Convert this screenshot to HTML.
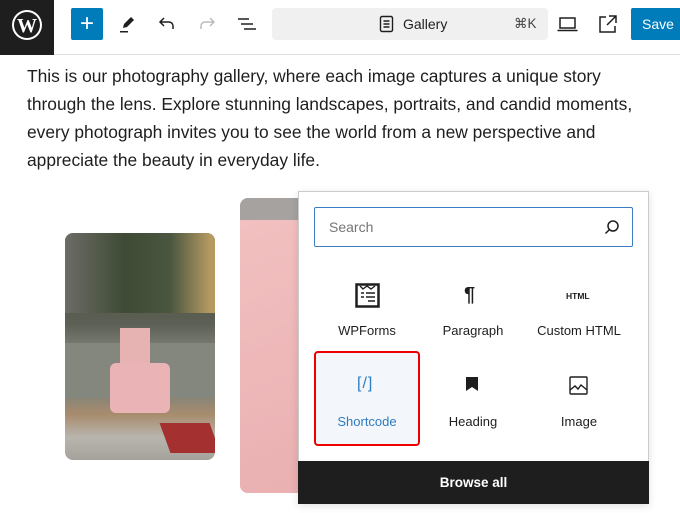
<!DOCTYPE html>
<html><head><meta charset="utf-8"><style>
*{box-sizing:border-box;margin:0;padding:0}
body{width:680px;height:513px;overflow:hidden;background:#fff;font-family:"Liberation Sans",sans-serif;color:#1e1e1e;position:relative}
.abs{position:absolute}
.top{left:0;top:0;width:680px;height:55px;border-bottom:1px solid #e0e0e0;background:#fff}
.logo{left:0;top:0;width:54px;height:55px;background:#1e1e1e}
.plus{left:71px;top:8px;width:32px;height:32px;background:#007cba;border-radius:2px;color:#fff;font-size:24px;line-height:31px;text-align:center}
.bar{left:272px;top:8px;width:276px;height:32px;background:#f0f0f0;border-radius:4px}
.save{left:631px;top:8px;width:52px;height:32px;background:#007cba;border-radius:2px;color:#fff;font-size:14px;line-height:32px;padding-left:11px}
.para{left:27px;top:62px;white-space:nowrap;font-size:17.4px;line-height:28px;color:#1e1e1e}
.ph1{left:65px;top:233px;width:150px;height:227px;border-radius:8px;overflow:hidden;background:linear-gradient(180deg,#6b6a60 0%,#4e5a42 20%,#5c5f55 40%,#8a8c84 55%,#7f837a 70%,#a88c6e 80%,#b8b5ae 90%,#a5a29c 100%)}
.ph2{left:240px;top:198px;width:70px;height:295px;border-radius:8px;overflow:hidden;background:#a6a29f}
.pop{left:298px;top:191px;width:351px;height:313px;background:#fff;border:1px solid #ccc;box-shadow:0 2px 8px rgba(0,0,0,.12)}
.inp{left:314px;top:207px;width:319px;height:40px;border:1.5px solid #3b7cc4;border-radius:2px;font-size:14px;color:#757575;padding:11px 0 0 14px}
.it{width:106px;text-align:center;font-size:13px;color:#1e1e1e}
.browse{left:298px;top:461px;width:351px;height:43px;background:#1e1e1e;color:#fff;font-size:13.5px;font-weight:bold;text-align:center;line-height:43px}
</style></head><body>
<div class="abs top"></div>
<div class="abs logo"><svg width="54" height="55" viewBox="0 0 54 55"><circle cx="27" cy="25" r="15" fill="#fff"/><circle cx="27" cy="25" r="13" fill="#1e1e1e"/><text x="27" y="32" font-family="Liberation Serif" font-weight="bold" font-size="20" fill="#fff" text-anchor="middle">W</text></svg></div>
<div class="abs plus">+</div>
<svg class="abs" style="left:115px;top:12px" width="24" height="24" viewBox="0 0 24 24"><path d="M8 16l1-4 7-7 3 3-7 7z" fill="#1e1e1e"/><rect x="5" y="19" width="8" height="1.5" fill="#1e1e1e"/></svg>
<svg class="abs" style="left:155px;top:12px" width="24" height="24" viewBox="0 0 24 24" fill="none" stroke="#1e1e1e" stroke-width="1.5"><path d="M18 17v-3a4 4 0 0 0-4-4H6M9 6l-4 4 4 4"/></svg>
<svg class="abs" style="left:195px;top:12px" width="24" height="24" viewBox="0 0 24 24" fill="none" stroke="#bbb" stroke-width="1.5"><path d="M6 17v-3a4 4 0 0 1 4-4h8M15 6l4 4-4 4"/></svg>
<svg class="abs" style="left:235px;top:12px" width="24" height="24" viewBox="0 0 24 24" stroke="#1e1e1e" stroke-width="1.5"><path d="M3 7h11M6 12h12M9 17h12"/></svg>
<div class="abs bar"></div>
<svg class="abs" style="left:379px;top:15px" width="16" height="18" viewBox="0 0 16 18" fill="none" stroke="#1e1e1e" stroke-width="1.4"><rect x="1.5" y="1.5" width="12" height="15" rx="1.5"/><path d="M4.5 6h6M4.5 9h6M4.5 12h6"/></svg>
<div class="abs" style="left:403px;top:16px;font-size:14px">Gallery</div>
<div class="abs" style="left:514px;top:16px;font-size:13.5px;color:#444">⌘K</div>
<svg class="abs" style="left:556px;top:14px" width="24" height="20" viewBox="0 0 24 20" fill="none" stroke="#1e1e1e" stroke-width="1.5"><rect x="4" y="4" width="15" height="10"/><path d="M1.5 16.5h20"/></svg>
<svg class="abs" style="left:597px;top:13px" width="22" height="22" viewBox="0 0 22 22" fill="none" stroke="#1e1e1e" stroke-width="1.5"><path d="M9 4H3v15h15v-6M12 3h7v7M19 3l-9 9"/></svg>
<div class="abs save">Save</div>
<div class="abs para">This is our photography gallery, where each image captures a unique story<br>through the lens. Explore stunning landscapes, portraits, and candid moments,<br>every photograph invites you to see the world from a new perspective and<br>appreciate the beauty in everyday life.</div>
<div class="abs ph1"><div class="abs" style="left:0;top:0;width:150px;height:80px;background:linear-gradient(90deg,#6c6c66,#3e4a34 40%,#4a5640 70%,#b59a62 97%)"></div><div class="abs" style="left:0;top:110px;width:150px;height:55px;background:#83877d"></div><div class="abs" style="left:55px;top:95px;width:30px;height:45px;background:#e7b2b2"></div><div class="abs" style="left:45px;top:130px;width:60px;height:50px;background:#eab3b5;border-radius:6px"></div><div class="abs" style="left:100px;top:190px;width:50px;height:30px;background:#a53030;transform:skew(20deg)"></div></div>
<div class="abs ph2"><div class="abs" style="left:0;top:20px;width:60px;height:275px;background:linear-gradient(160deg,#f2c0c0,#eab0b2)"></div><div class="abs" style="left:0;top:0;width:70px;height:22px;background:#a6a29f"></div></div>
<div class="abs pop"></div>
<div class="abs inp">Search</div>
<svg class="abs" style="left:604px;top:219px" width="16" height="16" viewBox="0 0 16 16" fill="none" stroke="#1e1e1e" stroke-width="1.5"><circle cx="9" cy="7" r="5"/><path d="M5.5 10.5L1.5 14.5"/></svg>
<div class="abs" style="left:314px;top:351px;width:106px;height:95px;border:2px solid #e00;border-radius:4px;background:#f3f7fb"></div>
<svg class="abs" style="left:355px;top:283px" width="25" height="25" viewBox="0 0 25 25"><rect x="1.5" y="1.5" width="22" height="22" fill="none" stroke="#1e1e1e" stroke-width="2.5"/><path d="M5 3l3 3 4-3 4 3 4-3" stroke="#1e1e1e" fill="none" stroke-width="1.4"/><path d="M6 10h3M11 10h9M6 14h3M11 14h9M13 18h7" stroke="#1e1e1e" stroke-width="1.6"/></svg>
<div class="abs" style="left:464px;top:284px;font-size:20px;font-weight:bold">¶</div>
<div class="abs" style="left:566px;top:291px;font-size:8.5px;font-weight:bold">HTML</div>
<div class="abs it" style="left:314px;top:323px">WPForms</div>
<div class="abs it" style="left:420px;top:323px">Paragraph</div>
<div class="abs it" style="left:526px;top:323px">Custom HTML</div>
<div class="abs" style="left:357px;top:375px;font-size:16px;color:#2e7bbf;letter-spacing:1px">[/]</div>
<svg class="abs" style="left:465px;top:376px" width="14" height="16" viewBox="0 0 14 16"><path d="M1 1h12v14l-6-4-6 4z" fill="#1e1e1e"/></svg>
<svg class="abs" style="left:569px;top:376px" width="19" height="19" viewBox="0 0 19 19" fill="none" stroke="#1e1e1e" stroke-width="1.4"><rect x="1" y="1" width="17" height="17" rx="1"/><path d="M1 14l5-4 3 3 3-4 6 5"/></svg>
<div class="abs it" style="left:314px;top:414px;color:#2e7bbf">Shortcode</div>
<div class="abs it" style="left:420px;top:414px">Heading</div>
<div class="abs it" style="left:526px;top:414px">Image</div>
<div class="abs browse">Browse all</div>
</body></html>
